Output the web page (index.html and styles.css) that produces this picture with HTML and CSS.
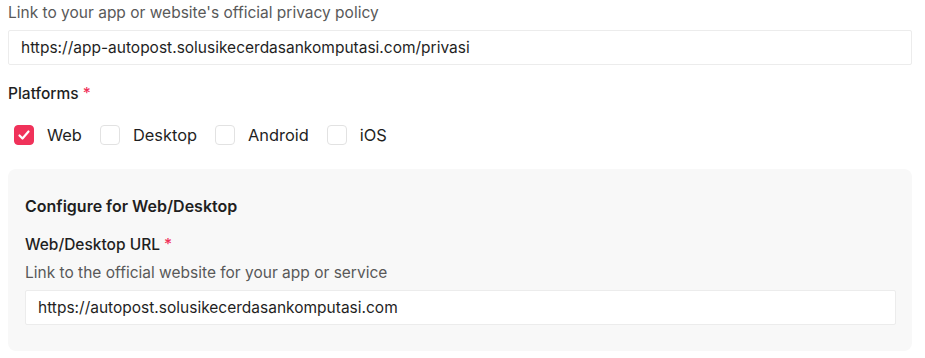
FILE: index.html
```html
<!DOCTYPE html>
<html lang="en">
<head>
    <meta charset="UTF-8">
    <meta name="viewport" content="width=device-width, initial-scale=1.0">
    <title>App Settings</title>
    <link rel="stylesheet" href="styles.css">
</head>
<body>
    <div class="form">
        <div class="field">
            <p class="hint">Link to your app or website's official privacy policy</p>
            <input type="text" class="text-input" value="https://app-autopost.solusikecerdasankomputasi.com/privasi" />
        </div>

        <div class="field">
            <label class="label">Platforms <span class="req">*</span></label>
            <div class="checks">
                <label class="check"><span class="box on"><svg viewBox="0 0 20 20" width="20" height="20"><path d="M5.5 10.5l3 3 6-7" fill="none" stroke="#fff" stroke-width="2.2" stroke-linecap="round" stroke-linejoin="round"/></svg></span>Web</label>
                <label class="check"><span class="box"></span>Desktop</label>
                <label class="check"><span class="box"></span>Android</label>
                <label class="check"><span class="box"></span>iOS</label>
            </div>
        </div>

        <div class="config">
            <h3 class="config-title">Configure for Web/Desktop</h3>
            <label class="label">Web/Desktop URL <span class="req">*</span></label>
            <p class="hint">Link to the official website for your app or service</p>
            <input type="text" class="text-input" value="https://autopost.solusikecerdasankomputasi.com" />
        </div>
    </div>
</body>
</html>
```

FILE: styles.css
```css
body {
    margin: 0;
    background: #fff;
    font-family: Inter, "Noto Sans", sans-serif;
    color: #1f1f1f;
}
.form {
    width: 904px;
    padding: 2px 0 0 8px;
}
.field {
    margin-bottom: 18px;
}
.hint {
    margin: 0 0 6px;
    font-size: 15.5px;
    line-height: 22px;
    color: #595959;
}
.label {
    display: block;
    font-size: 15.5px;
    line-height: 22px;
    font-weight: 500;
    color: #1f1f1f;
    margin-bottom: 6px;
}
.req { color: #f0325a; }
.text-input {
    display: block;
    box-sizing: border-box;
    width: 100%;
    height: 35px;
    padding: 0 12px;
    border: 1px solid #ececec;
    border-radius: 2px;
    background: #fff;
    font-family: inherit;
    font-size: 15.5px;
    color: #1f1f1f;
    outline: none;
}
.checks {
    display: flex;
    gap: 18px;
    padding: 13px 0 0 6px;
}
.check {
    display: flex;
    align-items: center;
    gap: 13px;
    font-size: 16.4px;
    line-height: 22px;
    color: #1f1f1f;
}
.box {
    display: flex;
    box-sizing: border-box;
    width: 20px;
    height: 20px;
    border: 1px solid #e2e2e2;
    border-radius: 4px;
    background: #fff;
}
.box.on {
    background: #f0325a;
    border-color: #f0325a;
}
.box.on svg { margin: -1px; }
.config {
    margin-top: 23px;
    background: #f8f8f8;
    border-radius: 8px;
    padding: 26px 16px 26px 17px;
}
.config-title {
    margin: 0 0 17px;
    font-size: 16px;
    line-height: 22px;
    font-weight: 600;
}
```
